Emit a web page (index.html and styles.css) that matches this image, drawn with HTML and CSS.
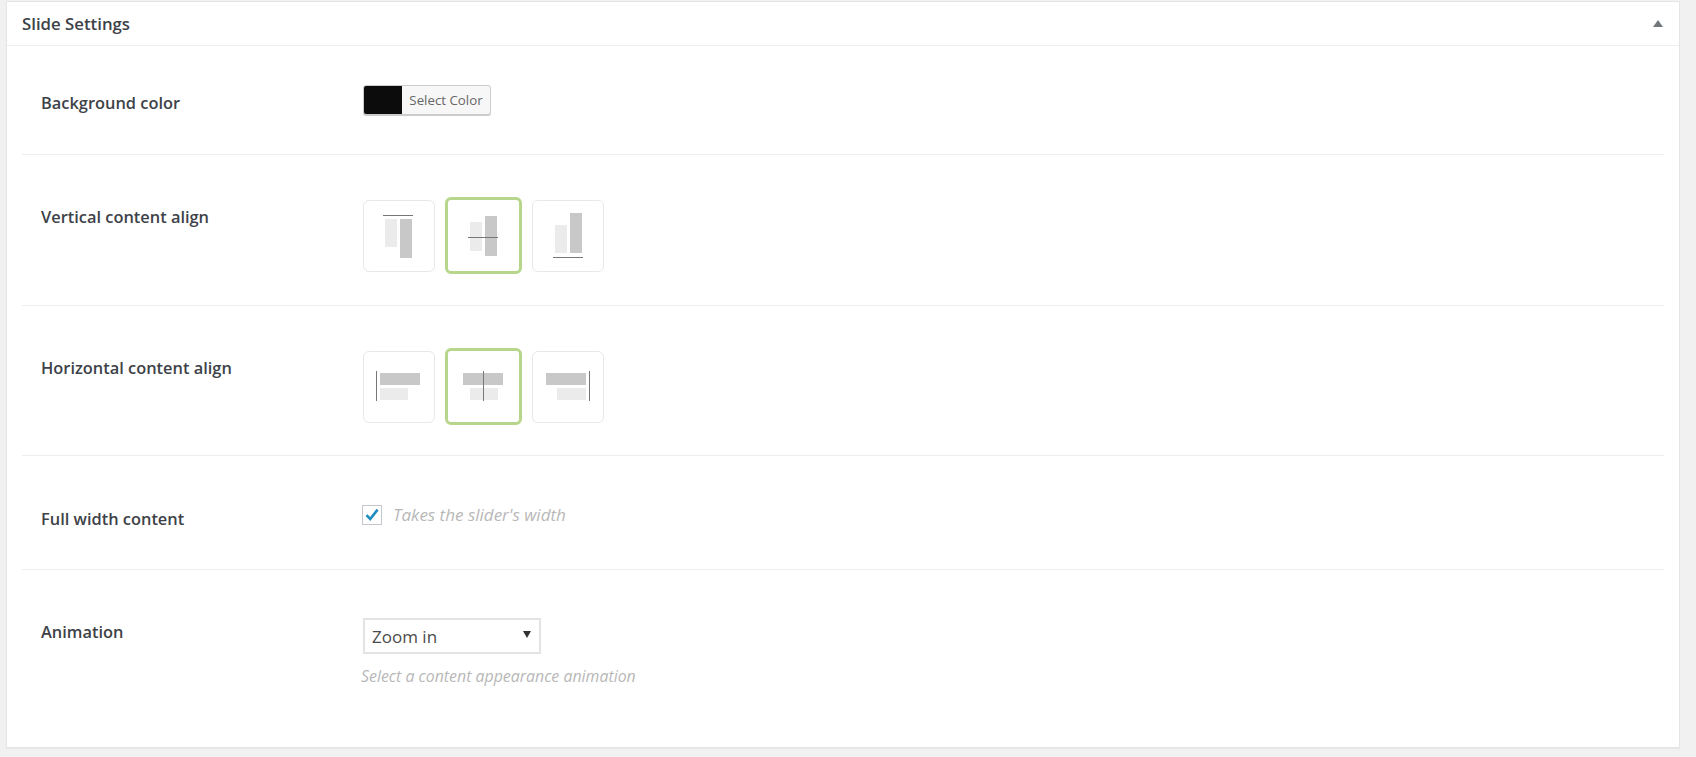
FILE: index.html
```html
<!DOCTYPE html>
<html lang="en">
<head>
    <meta charset="UTF-8">
    <meta name="viewport" content="width=device-width, initial-scale=1.0">
    <title>Slide Settings</title>
    <link rel="stylesheet" href="styles.css">
</head>
<body>

    <div class="panel">
        <div class="panel-head">
            <h2>Slide Settings</h2>
            <span class="toggle"></span>
        </div>

        <div class="panel-body">
            <div class="row row-color">
                <div class="label">Background color</div>
                <div class="field">
                    <div class="color-btn">
                        <span class="swatch"></span>
                        <span class="color-text">Select Color</span>
                    </div>
                </div>
            </div>

            <div class="row row-valign">
                <div class="label">Vertical content align</div>
                <div class="field choices">
                    <div class="choice">
                        <svg width="72" height="72" viewBox="0 0 72 72">
                            <rect x="22" y="19" width="12" height="28" fill="#ebebeb"/>
                            <rect x="37" y="19" width="12" height="39" fill="#c8c8c8"/>
                            <rect x="20" y="15" width="30" height="1" fill="#777"/>
                        </svg>
                    </div>
                    <div class="choice selected">
                        <svg width="72" height="72" viewBox="0 0 72 72">
                            <rect x="22" y="22" width="12" height="29" fill="#ebebeb"/>
                            <rect x="37" y="16" width="12" height="40" fill="#c8c8c8"/>
                            <rect x="20" y="37" width="30" height="1" fill="#777"/>
                        </svg>
                    </div>
                    <div class="choice">
                        <svg width="72" height="72" viewBox="0 0 72 72">
                            <rect x="23" y="25" width="12" height="28" fill="#ebebeb"/>
                            <rect x="38" y="13" width="12" height="40" fill="#c8c8c8"/>
                            <rect x="21" y="57" width="30" height="1" fill="#777"/>
                        </svg>
                    </div>
                </div>
            </div>

            <div class="row row-halign">
                <div class="label">Horizontal content align</div>
                <div class="field choices">
                    <div class="choice">
                        <svg width="72" height="72" viewBox="0 0 72 72">
                            <rect x="17" y="22" width="40" height="12" fill="#c8c8c8"/>
                            <rect x="17" y="37" width="28" height="12" fill="#ebebeb"/>
                            <rect x="13" y="20" width="1" height="30" fill="#777"/>
                        </svg>
                    </div>
                    <div class="choice selected">
                        <svg width="72" height="72" viewBox="0 0 72 72">
                            <rect x="15" y="22" width="40" height="12" fill="#c8c8c8"/>
                            <rect x="22" y="37" width="28" height="12" fill="#ebebeb"/>
                            <rect x="35" y="20" width="1" height="30" fill="#777"/>
                        </svg>
                    </div>
                    <div class="choice">
                        <svg width="72" height="72" viewBox="0 0 72 72">
                            <rect x="14" y="22" width="40" height="12" fill="#c8c8c8"/>
                            <rect x="25" y="37" width="29" height="12" fill="#ebebeb"/>
                            <rect x="57" y="20" width="1" height="30" fill="#777"/>
                        </svg>
                    </div>
                </div>
            </div>

            <div class="row row-width">
                <div class="label">Full width content</div>
                <div class="field check-line">
                    <span class="checkbox">
                        <svg width="18" height="18" viewBox="0 0 18 18">
                            <path d="M3.5 9.2 L7.2 13 L14.6 3.6" fill="none" stroke="#1e8cbe" stroke-width="2.6"/>
                        </svg>
                    </span>
                    <span class="hint hint-check">Takes the slider's width</span>
                </div>
            </div>

            <div class="row row-anim">
                <div class="label">Animation</div>
                <div class="field">
                    <div class="select">
                        <span>Zoom in</span>
                        <span class="arrow"></span>
                    </div>
                    <div class="hint help">Select a content appearance animation</div>
                </div>
            </div>
        </div>
    </div>

</body>
</html>
```

FILE: styles.css
```css
body {
    margin: 0;
    padding: 1px 16px 9px 6px;
    background-color: #f1f1f1;
    font-family: "Open Sans", "Noto Sans", sans-serif;
    color: #32373c;
}
.panel {
    background-color: #fff;
    border: 1px solid #e5e5e5;
    box-shadow: 0 1px 1px rgba(0, 0, 0, 0.04);
}
.panel-head {
    display: flex;
    justify-content: space-between;
    align-items: center;
    height: 43px;
    padding: 0 16px 0 15px;
    border-bottom: 1px solid #eee;
}
.panel-head h2 {
    margin: 0;
    font-size: 16.8px;
    font-weight: 600;
    color: #3d4248;
}
.toggle {
    width: 0;
    height: 0;
    border-left: 5px solid transparent;
    border-right: 5px solid transparent;
    border-bottom: 7px solid #72777c;
}
.panel-body {
    padding: 0 15px;
}
.row {
    display: flex;
    border-bottom: 1px solid #eee;
}
.row:last-child {
    border-bottom: none;
}
.label {
    width: 340px;
    padding-left: 19px;
    box-sizing: border-box;
    font-size: 16.4px;
    font-weight: 600;
    line-height: 20px;
    color: #3d4248;
}
/* Each row has its own height in the settings table */
.row-color {
    height: 109px;
    box-sizing: border-box;
}
.row-color .label {
    padding-top: 47px;
}
.row-color .field {
    padding-top: 39px;
}
.row-valign {
    height: 151px;
    box-sizing: border-box;
}
.row-valign .label {
    padding-top: 52px;
}
.row-valign .field {
    padding-top: 42px;
}
.row-halign {
    height: 150px;
    box-sizing: border-box;
}
.row-halign .label {
    padding-top: 52px;
}
.row-halign .field {
    padding-top: 42px;
}
.row-width {
    height: 114px;
    box-sizing: border-box;
}
.row-width .label {
    padding-top: 53px;
}
.row-width .field {
    padding-top: 47px;
}
.row-anim {
    height: 177px;
    box-sizing: border-box;
}
.row-anim .label {
    padding-top: 52px;
}
.row-anim .field {
    padding-top: 48px;
}
.color-btn {
    display: flex;
    width: 128px;
    height: 30px;
    margin-left: 1px;
    box-sizing: border-box;
    border: 1px solid #ccc;
    border-radius: 3px;
    box-shadow: 0 1px 0 #ccc;
    background-color: #f7f7f7;
    overflow: hidden;
}
.swatch {
    width: 38px;
    background-color: #0c0c0c;
}
.color-text {
    flex: 1;
    text-align: center;
    font-size: 13.3px;
    line-height: 28px;
    color: #666;
}
.choices {
    display: flex;
    align-items: flex-start;
    align-self: flex-start;
    gap: 10px;
    margin-left: 1px;
}
.choice {
    display: flex;
    width: 72px;
    height: 72px;
    margin-top: 3px;
    box-sizing: border-box;
    border: 1px solid #e8e8e8;
    border-radius: 6px;
}
.choice.selected {
    width: 77px;
    height: 77px;
    margin-top: 0;
    border: 3px solid #b7d68c;
}
.choice svg {
    display: block;
    flex-shrink: 0;
    margin: -1px 0 0 -1px;
}
.choice.selected svg {
    margin: 0;
}
.check-line {
    display: flex;
    align-items: center;
    align-self: flex-start;
    gap: 11px;
}
.checkbox {
    width: 20px;
    height: 20px;
    box-sizing: border-box;
    border: 1px solid #c3c6ca;
    background-color: #fff;
}
.checkbox svg {
    display: block;
}
.hint {
    font-size: 15.9px;
    font-style: italic;
    color: #b8b8b8;
}
.hint-check {
    font-size: 17px;
}
.select {
    display: flex;
    justify-content: space-between;
    align-items: center;
    width: 178px;
    height: 36px;
    margin-left: 1px;
    padding: 1px 8px 0 7px;
    box-sizing: border-box;
    border: 2px solid #e4e4e4;
    font-size: 17px;
    color: #4a4a4a;
}
.arrow {
    width: 0;
    height: 0;
    margin-bottom: 4px;
    border-left: 4px solid transparent;
    border-right: 4px solid transparent;
    border-top: 7px solid #333;
}
.help {
    margin: 11px 0 0 -1px;
}
```
